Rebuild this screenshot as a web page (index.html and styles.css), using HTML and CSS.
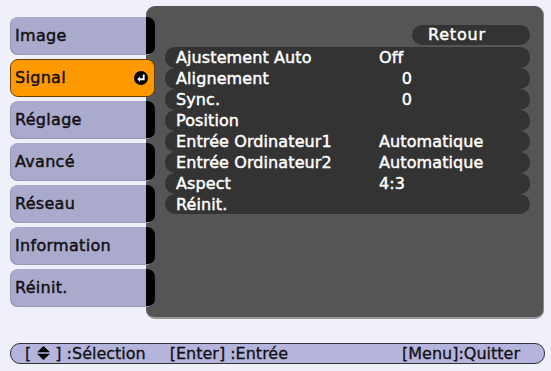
FILE: index.html
```html
<!DOCTYPE html>
<html lang="fr">
<head>
    <meta charset="UTF-8">
    <meta name="viewport" content="width=device-width, initial-scale=1.0">
    <title>Menu Signal</title>
    <link rel="stylesheet" href="styles.css">
</head>
<body>
    <div class="main">
        <ul class="tabs">
            <li class="tab">Image</li>
            <li class="tab active">Signal
                <svg class="enter" width="14" height="14" viewBox="0 0 13 13">
                    <circle cx="6.5" cy="6.5" r="6.5" fill="#000"/>
                    <path d="M9 3.2 V7.6 H5" stroke="#fff" stroke-width="1.8" fill="none"/>
                    <path d="M5.6 5.2 L3 7.6 L5.6 10 Z" fill="#fff"/>
                </svg>
            </li>
            <li class="tab">Réglage</li>
            <li class="tab">Avancé</li>
            <li class="tab">Réseau</li>
            <li class="tab">Information</li>
            <li class="tab">Réinit.</li>
        </ul>

        <div class="panel">
            <div class="back">Retour</div>
            <div class="rows">
                <div class="row"><span class="label">Ajustement Auto</span><span>Off</span></div>
                <div class="row"><span class="label">Alignement</span><span class="num">0</span></div>
                <div class="row"><span class="label">Sync.</span><span class="num">0</span></div>
                <div class="row"><span class="label">Position</span></div>
                <div class="row"><span class="label">Entrée Ordinateur1</span><span>Automatique</span></div>
                <div class="row"><span class="label">Entrée Ordinateur2</span><span>Automatique</span></div>
                <div class="row"><span class="label">Aspect</span><span>4:3</span></div>
                <div class="row last"><span class="label">Réinit.</span></div>
            </div>
        </div>
    </div>

    <div class="help">
        <span class="key">[<svg class="updown" width="13" height="14" viewBox="0 0 13 14">
            <polygon points="6.5,0 13,6.2 0,6.2" fill="#000"/>
            <polygon points="0,7.8 13,7.8 6.5,14" fill="#000"/>
        </svg>] :Sélection</span>
        <span class="key enter-key">[Enter] :Entrée</span>
        <span class="key quit">[Menu]:Quitter</span>
    </div>
</body>
</html>
```

FILE: styles.css
```css
body {
    margin: 0;
    background-color: #f0f0fa;
    font-family: "DejaVu Sans", sans-serif;
    font-size: 16px;
}
.main {
    display: flex;
    padding-top: 6px;
    height: 313px;
}
.tabs {
    list-style: none;
    margin: 11px 0 0 10px;
    padding: 0;
    width: 145px;
    display: flex;
    flex-direction: column;
    gap: 4px;
    position: relative;
    z-index: 1;
}
.tab {
    box-sizing: border-box;
    height: 38px;
    line-height: 38px;
    padding-left: 5px;
    color: #111;
    -webkit-text-stroke: 0.45px #111;
    letter-spacing: 0.3px;
    background: linear-gradient(to right, #aaaacc 136px, #000 136px);
    border-radius: 8px;
    box-shadow: inset 1px -1px 0 #9898bb;
}
.tab.active {
    position: relative;
    background: #ff9900;
    border: 1px solid #6b4000;
    line-height: 36px;
    padding-left: 4px;
    box-shadow: none;
}
.enter {
    position: absolute;
    right: 6px;
    top: 11px;
}
.panel {
    box-sizing: border-box;
    margin-left: -9px;
    width: 398px;
    height: 313px;
    padding: 19px 13px 0 19px;
    background-color: #555;
    border-radius: 9px;
    border-right: 1px solid #8a8a8a;
    border-bottom: 2px solid #999;
}
.back {
    box-sizing: border-box;
    margin-left: auto;
    width: 118px;
    height: 20px;
    line-height: 20px;
    padding-left: 16px;
    background-color: #333;
    border-radius: 10px;
    color: #fff;
    letter-spacing: 0.8px;
    -webkit-text-stroke: 0.45px #fff;
}
.rows {
    margin-top: 2px;
}
.row {
    display: flex;
    height: 21px;
    line-height: 21px;
    padding-left: 11px;
    background-color: #333;
    border-radius: 10px;
    color: #fff;
    -webkit-text-stroke: 0.45px #fff;
    letter-spacing: 0.1px;
}
.row.last {
    height: 20px;
}
.label {
    width: 203px;
}
.num {
    width: 33px;
    text-align: right;
}
.help {
    box-sizing: border-box;
    display: flex;
    align-items: center;
    margin: 24px 6px 0 10px;
    height: 21px;
    padding: 0 24px 0 14px;
    background-color: #b4b4dc;
    border: 1px solid #333;
    border-radius: 10px;
    color: #111;
    -webkit-text-stroke: 0.3px #111;
    white-space: pre;
}
.updown {
    margin: 0 5px 0 6px;
    vertical-align: -1px;
}
.enter-key {
    margin-left: 24px;
}
.quit {
    margin-left: auto;
}
```
